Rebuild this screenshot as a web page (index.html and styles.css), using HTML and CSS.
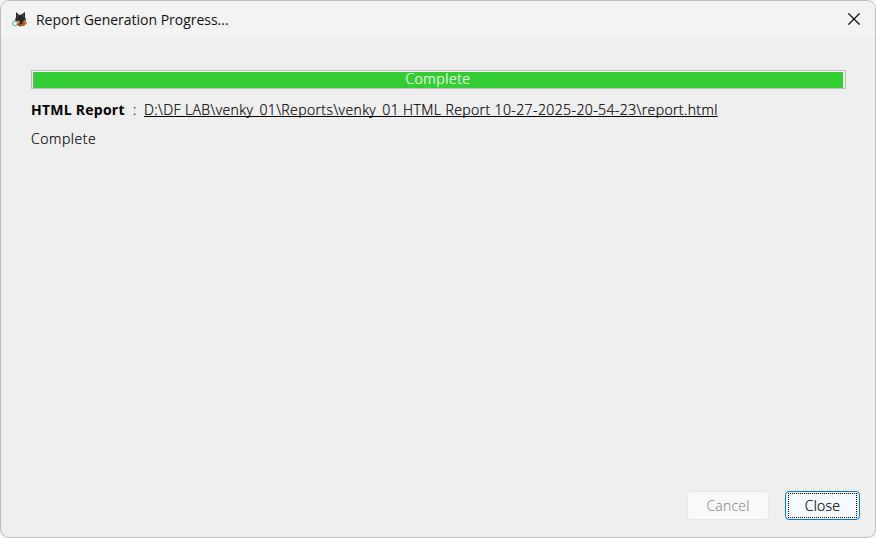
FILE: index.html
```html
<!DOCTYPE html>
<html lang="en">
<head>
<meta charset="utf-8">
<title>Report Generation Progress...</title>
<link rel="stylesheet" href="styles.css">
</head>
<body>
<main class="dialog">
  <header class="titlebar">
    <svg class="app-icon" viewBox="0 0 16 16" aria-hidden="true">
      <path fill="#25282c" d="M4 0l3 2.7h2L13 0v5l1 3-2 4H6L3 8l1-3z"/>
      <path fill="#806b63" d="M5 2l1 2-1 1zM12 2l-1 2 1 1z"/>
      <path fill="#b65c1c" d="M5 8l2 1 2-1 2 1 2-1 2 3-3 3H7l-2-2z"/>
      <path fill="#e49930" d="M5 9h2v2H5zM12 8l3 2-2 1z"/>
      <path fill="#27201c" d="M8 8h3l-1 4H8z"/>
      <path stroke="#704323" stroke-width="1.5" d="M5 12l4 2"/>
      <circle cx="3" cy="11.5" r="2.4" fill="#d9f5fa" stroke="#649fae"/>
    </svg>
    <h1 class="title">Report Generation Progress...</h1>
    <button class="dismiss" aria-label="Close window">
      <svg width="12" height="12" viewBox="0 0 12 12"><path d="M.4.4l11.2 11.2M11.6.4L.4 11.6" fill="none" stroke="#111" stroke-width="1.25"/></svg>
    </button>
  </header>
  <section class="content">
    <div class="progress"><div class="bar"><span class="bar-label">Complete</span></div></div>
    <div class="report">
      <strong class="name">HTML Report</strong>
      <span class="colon">:</span>
      <a class="path">D:\DF LAB\venky_01\Reports\venky_01 HTML Report 10-27-2025-20-54-23\report.html</a>
    </div>
    <div class="status">Complete</div>
  </section>
  <footer class="actions">
    <button class="btn cancel" disabled>Cancel</button>
    <button class="btn close"><span class="focus">Close</span></button>
  </footer>
</main>
</body>
</html>
```
FILE: styles.css
```css
* { box-sizing: border-box; }
body { margin: 0; background: #f5f5f5; font: 14px/20px "Open Sans", "Noto Sans", sans-serif; color: #000; }
.dialog { width: 876px; height: 538px; display: flex; flex-direction: column; overflow: hidden; border: 1px solid #bdbdbd; border-radius: 9px; background: #efefef; }
.titlebar { height: 37px; flex: none; display: flex; align-items: center; padding: 0 15px 0 11px; background: #f3f3f3; }
.app-icon { width: 16px; height: 16px; }
.title { margin: 1px 0 0 8px; font-size: 14px; font-weight: 400; letter-spacing: -.02px; white-space: nowrap; color: #111; }
.dismiss { display: flex; margin: 0 0 2px auto; padding: 0; border: 0; background: none; }
.content { flex: 1; padding: 32px 29px 0 30px; font-weight: 300; }
.progress { height: 19px; padding: 1px; border: 1px solid #bcbcbc; background: #f5f5f5; }
.bar { height: 16px; width: 810px; padding-bottom: 3px; display: flex; align-items: center; justify-content: center; background: #32cd32; color: #fff; }
.bar-label, .status { letter-spacing: .55px; }
.bar-label, .status, .path, .colon, .focus { -webkit-text-stroke: .2px currentColor; }
.report { height: 22px; margin-top: 11px; display: flex; white-space: nowrap; }
.name { width: 102px; font-weight: 700; letter-spacing: .25px; }
.colon { width: 11px; }
.path { letter-spacing: .4px; text-decoration: underline; text-underline-offset: 1px; text-decoration-thickness: 1px; text-decoration-skip-ink: none; }
.status { margin-top: 7px; }
.actions { display: flex; justify-content: flex-end; gap: 16px; padding: 0 15px 17px 0; }
.btn { height: 29px; padding: 1px; border-radius: 4px; font: 300 14px/20px "Open Sans", "Noto Sans", sans-serif; letter-spacing: .2px; }
.cancel { width: 82px; border: 1px solid #e7e7e7; background: #f9f9f9; color: #777; }
.close { width: 75px; border: 1px solid #0078d4; background: #f5faff; color: #000; }
.focus { display: flex; align-items: center; justify-content: center; height: 25px; margin: 0 1px; border: 1px dotted #000; }
```
